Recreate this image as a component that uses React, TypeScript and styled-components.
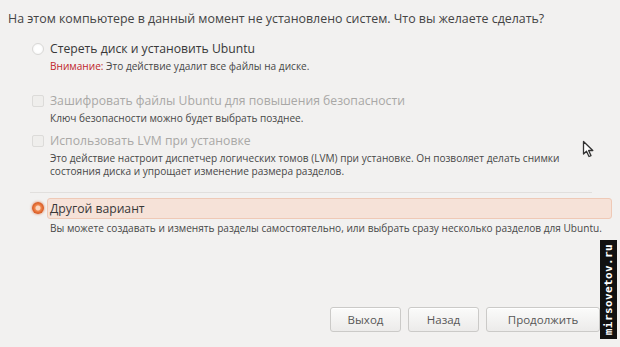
import React from "react";
import styled, { createGlobalStyle } from "styled-components";

const Global = createGlobalStyle`
  html, body { margin: 0; padding: 0; background: #f2f1f0; }
  body { font-family: "Open Sans", "Noto Sans", sans-serif; }
`;

const Page = styled.div`
  position: relative;
  width: 620px;
  height: 347px;
  box-sizing: border-box;
  background: #f2f1f0;
  display: flex;
  flex-direction: column;
  padding: 11px 0 15px 8px;
  overflow: hidden;
`;

const Heading = styled.div`
  font-size: 12.4px;
  line-height: 16px;
  color: #444444;
`;

const Options = styled.div`
  display: flex;
  flex-direction: column;
  padding: 0 8px 0 24px;
  margin-top: 14px;
`;

const Option = styled.div<{ $gap?: number }>`
  display: grid;
  grid-template-columns: 12px 1fr;
  column-gap: 6px;
  margin-top: ${(p) => p.$gap ?? 0}px;
`;

const Radio = styled.span<{ $checked?: boolean }>`
  width: 12px;
  height: 12px;
  margin-top: 2px;
  border-radius: 50%;
  box-sizing: border-box;
  ${(p) =>
    p.$checked
      ? `background: radial-gradient(circle, #fcd6bf 0 2px, #f0884f 3px, #d5531c 6px);
         box-shadow: 0 0 2px 1px rgba(215,90,35,0.35);`
      : `background: radial-gradient(circle, #ffffff 0 3px, #f4f4f4 6px);
         border: 1px solid #d9d8d6;`}
`;

const Check = styled.span`
  width: 12px;
  height: 12px;
  margin-top: 2px;
  box-sizing: border-box;
  border: 1px solid #dcdbd9;
  border-radius: 2px;
  background: #efeeec;
`;

const Label = styled.div<{ $disabled?: boolean; $selected?: boolean }>`
  font-size: 12.2px;
  line-height: 16px;
  color: ${(p) => (p.$disabled ? "#a9a8a6" : "#383838")};
  ${(p) =>
    p.$selected
      ? `background: #f6e2d8; border: 1px solid #efc9b6; border-radius: 3px;
         margin: -2px 0 0 -3px; padding: 2px 2px 1px 2px;`
      : ""}
`;

const Desc = styled.div`
  grid-column: 2;
  font-size: 10.1px;
  line-height: 13px;
  color: #484848;
  margin-top: 3px;
`;

const Warn = styled.span`
  color: #c0262b;
`;

const Separator = styled.div`
  height: 1px;
  background: #e1dfdd;
  margin: 14px 20px 7px -2px;
`;

const Footer = styled.div`
  margin-top: auto;
  display: flex;
  justify-content: flex-end;
  gap: 7px;
  padding-right: 20px;
`;

const Button = styled.button<{ $w: number }>`
  width: ${(p) => p.$w}px;
  height: 25px;
  font-family: inherit;
  font-size: 11.5px;
  color: #575757;
  border: 1px solid #cbcac8;
  border-radius: 3px;
  background: linear-gradient(#fbfbfa, #ecebea);
  box-shadow: inset 0 1px 0 #ffffff;
  padding: 0;
`;

const Watermark = styled.div`
  position: absolute;
  left: 600px;
  top: 240px;
  width: 17px;
  height: 99px;
  background: #111;
  display: flex;
  align-items: center;
  justify-content: center;
`;

const WatermarkText = styled.span`
  transform: rotate(-90deg);
  white-space: nowrap;
  color: #fff;
  font-family: "DejaVu Sans Mono", monospace;
  font-weight: bold;
  font-size: 11px;
  letter-spacing: 0.4px;
`;

const Cursor = styled.svg`
  position: absolute;
  left: 582px;
  top: 140px;
`;

export default function App() {
  return (
    <>
      <Global />
      <Page>
        <Heading>
          На этом компьютере в данный момент не установлено систем. Что вы желаете сделать?
        </Heading>
        <Options>
          <Option>
            <Radio />
            <Label>Стереть диск и установить Ubuntu</Label>
            <Desc>
              <Warn>Внимание:</Warn> Это действие удалит все файлы на диске.
            </Desc>
          </Option>
          <Option $gap={20}>
            <Check />
            <Label $disabled>Зашифровать файлы Ubuntu для повышения безопасности</Label>
            <Desc>Ключ безопасности можно будет выбрать позднее.</Desc>
          </Option>
          <Option $gap={8}>
            <Check />
            <Label $disabled>Использовать LVM при установке</Label>
            <Desc>
              Это действие настроит диспетчер логических томов (LVM) при установке. Он позволяет делать снимки
              <br />
              состояния диска и упрощает изменение размера разделов.
            </Desc>
          </Option>
          <Separator />
          <Option>
            <Radio $checked />
            <Label $selected>Другой вариант</Label>
            <Desc>
              Вы можете создавать и изменять разделы самостоятельно, или выбрать сразу несколько разделов для Ubuntu.
            </Desc>
          </Option>
        </Options>
        <Footer>
          <Button $w={71}>Выход</Button>
          <Button $w={71}>Назад</Button>
          <Button $w={114}>Продолжить</Button>
        </Footer>
        <Cursor width="13" height="18" viewBox="0 0 13 18">
          <path d="M1.5 1.5 L1.5 14 L4.5 11.2 L7 16.5 L9 15.6 L6.6 10.5 L10.8 10.5 Z" fill="#fff" stroke="#333" strokeWidth="1.3" strokeLinejoin="round" />
        </Cursor>
        <Watermark>
          <WatermarkText>mirsovetov.ru</WatermarkText>
        </Watermark>
      </Page>
    </>
  );
}
